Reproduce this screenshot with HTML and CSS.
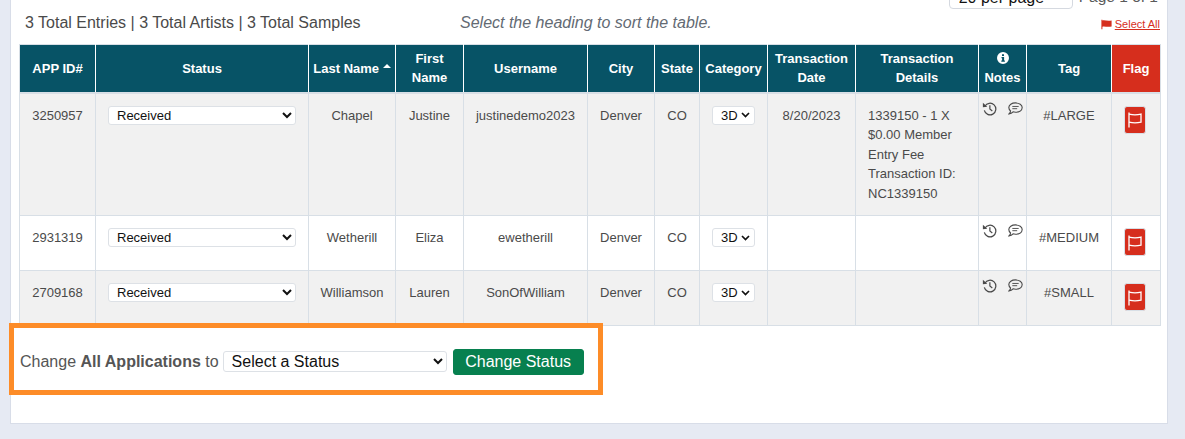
FILE: index.html
```html
<!DOCTYPE html>
<html lang="en">
<head>
    <meta charset="UTF-8">
    <meta name="viewport" content="width=device-width, initial-scale=1.0">
    <title>Entries</title>
    <link rel="stylesheet" href="styles.css">
</head>
<body>

    <svg class="icon-defs" width="0" height="0">
        <symbol id="history" viewBox="0 0 16 16">
            <path d="M3.1 5.6A6.2 6.2 0 1 1 2.5 10" fill="none" stroke="currentColor" stroke-width="1.3"/>
            <path d="M0.9 1.8 L5.6 6.2 L0.9 6.6 Z" fill="currentColor"/>
            <path d="M8.4 4.4 V8.6 L11 10.6" fill="none" stroke="currentColor" stroke-width="1.3"/>
        </symbol>
        <symbol id="comment" viewBox="0 0 16 14">
            <path d="M8 1 C12 1 15.2 3 15.2 6 C15.2 9 12 11 8 11 C7 11 6.2 10.9 5.4 10.6 C4.4 11.7 3 12.6 1 12.8 C2 11.9 2.6 10.8 2.7 9.7 C1.5 8.7 0.8 7.4 0.8 6 C0.8 3 4 1 8 1 Z" fill="none" stroke="currentColor" stroke-width="1.2"/>
            <path d="M4.6 4.8 H11.4 M4.6 7.2 H9.8" fill="none" stroke="currentColor" stroke-width="1"/>
        </symbol>
        <symbol id="flag" viewBox="0 0 14 16">
            <path d="M1 0.5 V15.5" fill="none" stroke="currentColor" stroke-width="1.3"/>
            <path d="M1 2.2 C5 3.2 9 3.2 13 2.2 V10.2 C9 11.2 5 11.2 1 10.2" fill="none" stroke="currentColor" stroke-width="1.3"/>
        </symbol>
        <symbol id="flag-solid" viewBox="0 0 14 12">
            <path d="M0.5 0 H1.8 V12 H0.5 Z M1.8 1 C4.5 0 8 2 13.5 0.8 V8.6 C8 9.8 4.5 7.8 1.8 8.8 Z" fill="currentColor"/>
        </symbol>
        <symbol id="info" viewBox="0 0 12 12">
            <path fill-rule="evenodd" d="M6 0a6 6 0 1 1 0 12A6 6 0 0 1 6 0Z M5 2.2h2v1.8h-2Z M4.5 5h2.6v3.6h0.8v1.2h-3.6v-1.2h0.8v-2.4h-0.6Z" fill="currentColor"/>
        </symbol>
    </svg>

    <div class="panel">
        <div class="list-head">
            <div class="summary">3 Total Entries | 3 Total Artists | 3 Total Samples</div>
            <div class="hint">Select the heading to sort the table.</div>
            <div class="list-tools">
                <div class="pager">
                    <select class="per-page"><option>20 per page</option></select>
                    <span>Page 1 of 1</span>
                </div>
                <div class="select-all">
                    <svg class="select-all-flag"><use href="#flag-solid"/></svg>
                    <a href="#">Select All</a>
                </div>
            </div>
        </div>

        <table class="entries">
            <colgroup>
                <col class="c-id"><col class="c-status"><col class="c-last"><col class="c-first">
                <col class="c-user"><col class="c-city"><col class="c-state"><col class="c-cat">
                <col class="c-date"><col class="c-details"><col class="c-notes"><col class="c-tag"><col class="c-flag">
            </colgroup>
            <thead>
                <tr>
                    <th>APP ID#</th>
                    <th>Status</th>
                    <th class="sorted">Last Name <span class="caret"></span></th>
                    <th>First<br>Name</th>
                    <th>Username</th>
                    <th>City</th>
                    <th>State</th>
                    <th>Category</th>
                    <th>Transaction<br>Date</th>
                    <th>Transaction<br>Details</th>
                    <th><svg class="info"><use href="#info"/></svg><br>Notes</th>
                    <th>Tag</th>
                    <th class="flag-head">Flag</th>
                </tr>
            </thead>
            <tbody>
                <tr class="odd">
                    <td>3250957</td>
                    <td><select class="status"><option>Received</option></select></td>
                    <td>Chapel</td>
                    <td>Justine</td>
                    <td>justinedemo2023</td>
                    <td>Denver</td>
                    <td>CO</td>
                    <td><select class="category"><option>3D</option></select></td>
                    <td>8/20/2023</td>
                    <td class="details">1339150 - 1 X $0.00 Member Entry Fee Transaction ID: NC1339150</td>
                    <td class="notes"><svg class="i-history"><use href="#history"/></svg><svg class="i-comment"><use href="#comment"/></svg></td>
                    <td>#LARGE</td>
                    <td class="flag-cell"><button class="flag-btn"><svg><use href="#flag"/></svg></button></td>
                </tr>
                <tr>
                    <td>2931319</td>
                    <td><select class="status"><option>Received</option></select></td>
                    <td>Wetherill</td>
                    <td>Eliza</td>
                    <td>ewetherill</td>
                    <td>Denver</td>
                    <td>CO</td>
                    <td><select class="category"><option>3D</option></select></td>
                    <td></td>
                    <td></td>
                    <td class="notes"><svg class="i-history"><use href="#history"/></svg><svg class="i-comment"><use href="#comment"/></svg></td>
                    <td>#MEDIUM</td>
                    <td class="flag-cell"><button class="flag-btn"><svg><use href="#flag"/></svg></button></td>
                </tr>
                <tr class="odd">
                    <td>2709168</td>
                    <td><select class="status"><option>Received</option></select></td>
                    <td>Williamson</td>
                    <td>Lauren</td>
                    <td>SonOfWilliam</td>
                    <td>Denver</td>
                    <td>CO</td>
                    <td><select class="category"><option>3D</option></select></td>
                    <td></td>
                    <td></td>
                    <td class="notes"><svg class="i-history"><use href="#history"/></svg><svg class="i-comment"><use href="#comment"/></svg></td>
                    <td>#SMALL</td>
                    <td class="flag-cell"><button class="flag-btn"><svg><use href="#flag"/></svg></button></td>
                </tr>
            </tbody>
        </table>

        <div class="bulk-change">
            <span>Change <b>All Applications</b> to</span>
            <select class="bulk-select"><option>Select a Status</option></select>
            <button class="bulk-btn">Change Status</button>
        </div>
    </div>

</body>
</html>
```

FILE: styles.css
```css
* {
    box-sizing: border-box;
}

html {
    overflow: hidden;
}

body {
    margin: 0;
    height: 439px;
    overflow: hidden;
    background: #e6eaf3;
    font-family: "Liberation Sans", Arial, sans-serif;
    color: #4a4a4a;
}

.icon-defs {
    position: absolute;
}

.panel {
    width: 1158px;
    height: 449px;
    margin: -25px 0 0 10px;
    padding: 0 8px;
    background: #fff;
    border: 1px solid #d8dde8;
}

.list-head {
    display: flex;
    height: 68px;
}

.summary {
    margin: 36px 0 0 6px;
    width: 435px;
    font-size: 16px;
    line-height: 22px;
}

.hint {
    margin-top: 36px;
    font-size: 16px;
    line-height: 22px;
    font-style: italic;
    color: #636a73;
}

.list-tools {
    margin-left: auto;
    display: flex;
    flex-direction: column;
    align-items: flex-end;
}

.pager {
    display: flex;
    align-items: center;
    gap: 6px;
    margin: 9px 1px 0 0;
    font-size: 15.5px;
    color: #5a5a5a;
}

.per-page {
    appearance: none;
    width: 124px;
    height: 24px;
    padding: 0 0 0 9px;
    font-family: inherit;
    font-size: 16px;
    color: #111;
    background: #fff url("data:image/svg+xml,%3Csvg xmlns='http://www.w3.org/2000/svg' width='10' height='6'%3E%3Cpath d='M1 1l4 4 4-4' fill='none' stroke='%23111' stroke-width='1.8'/%3E%3C/svg%3E") no-repeat right 6px center;
    border: 1px solid #d5d9e0;
    border-radius: 4px;
}

.select-all {
    display: flex;
    align-items: center;
    gap: 3px;
    margin: 8px -1px 0 0;
    font-size: 11px;
    line-height: 14px;
}

.select-all a {
    color: #d62e1d;
}

.select-all-flag {
    width: 11px;
    height: 11px;
    color: #d62e1d;
}

.entries {
    table-layout: fixed;
    border-collapse: collapse;
    width: 1141px;
    font-size: 13px;
}

.c-id { width: 76px; }
.c-status { width: 213px; }
.c-last { width: 87px; }
.c-first { width: 68px; }
.c-user { width: 124px; }
.c-city { width: 67px; }
.c-state { width: 45px; }
.c-cat { width: 68px; }
.c-date { width: 88px; }
.c-details { width: 123px; }
.c-notes { width: 48px; }
.c-tag { width: 85px; }
.c-flag { width: 49px; }

.entries th {
    height: 48px;
    padding: 0;
    background: #075366;
    color: #fff;
    font-weight: bold;
    line-height: 19px;
    text-align: center;
    vertical-align: middle;
    border: 1px solid #fff;
    border-top-color: #d8dfe6;
    border-bottom: 2px solid #d8dfe6;
}

.entries th:first-child {
    border-left-color: #d8dfe6;
}

.entries th:last-child {
    border-right-color: #d8dfe6;
}

.entries th.flag-head {
    background: #d62e1d;
}

.caret {
    display: inline-block;
    vertical-align: 5px;
    margin-left: 0;
    border-left: 4px solid transparent;
    border-right: 4px solid transparent;
    border-bottom: 4px solid #fff;
}

.info {
    width: 12px;
    height: 12px;
    vertical-align: -1px;
}

.entries td {
    height: 55px;
    padding: 12px 8px;
    line-height: 19.5px;
    text-align: center;
    vertical-align: top;
    border: 1px solid #d8dfe6;
}

.entries .odd td {
    background: #f1f1f1;
}

.entries td.details {
    padding-left: 12px;
    padding-right: 8px;
    text-align: left;
}

.entries td.notes {
    padding: 7px 0 0 3px;
    text-align: left;
    line-height: 14px;
}

.i-history {
    width: 15px;
    height: 15px;
    color: #4a4a4a;
}

.i-comment {
    width: 15px;
    height: 13px;
    margin-left: 11px;
    vertical-align: 1px;
    color: #4a4a4a;
}

.entries td.flag-cell {
    padding: 12px 0;
}

.flag-btn {
    display: block;
    width: 22px;
    height: 28px;
    margin: 0 auto;
    padding: 0;
    position: relative;
    left: -1px;
    background: #d62e1d;
    border: 1px solid #d8dfe6;
    border-radius: 3px;
    color: #fff;
}

.flag-btn svg {
    display: block;
    width: 14px;
    height: 16px;
    margin: 1px auto 0;
}

.status {
    display: block;
    width: 188px;
    height: 19px;
    margin: 0 auto;
    padding: 0 4px;
    font-family: inherit;
    font-size: 13px;
    color: #111;
    background: #fff;
    border: 1px solid #dde1e6;
    border-radius: 3px;
}

.category {
    appearance: none;
    display: block;
    width: 43px;
    height: 19px;
    margin: 0 auto;
    padding: 0 0 0 8px;
    font-family: inherit;
    font-size: 13px;
    color: #111;
    background: #fff url("data:image/svg+xml,%3Csvg xmlns='http://www.w3.org/2000/svg' width='9' height='6'%3E%3Cpath d='M1 1l3.5 3.5L8 1' fill='none' stroke='%23111' stroke-width='1.7'/%3E%3C/svg%3E") no-repeat right 4px center;
    border: 1px solid #dde1e6;
    border-radius: 3px;
}

.bulk-change {
    display: flex;
    align-items: center;
    gap: 5px;
    width: 594px;
    height: 72px;
    margin: -3px 0 0 -10px;
    padding: 5px 0 0 6px;
    position: relative;
    border: 5px solid #fd8c28;
    font-size: 16px;
    color: #555;
}

.bulk-select {
    width: 224px;
    height: 21px;
    margin-left: -1px;
    padding: 0 4px;
    font-family: inherit;
    font-size: 16px;
    color: #111;
    background: #fff;
    border: 1px solid #dde1e6;
    border-radius: 3px;
}

.bulk-btn {
    width: 131px;
    height: 26px;
    margin-left: 1px;
    padding: 0;
    font-family: inherit;
    font-size: 16px;
    color: #fff;
    background: #07804f;
    border: 1px solid #07804f;
    border-radius: 3px;
}
```
